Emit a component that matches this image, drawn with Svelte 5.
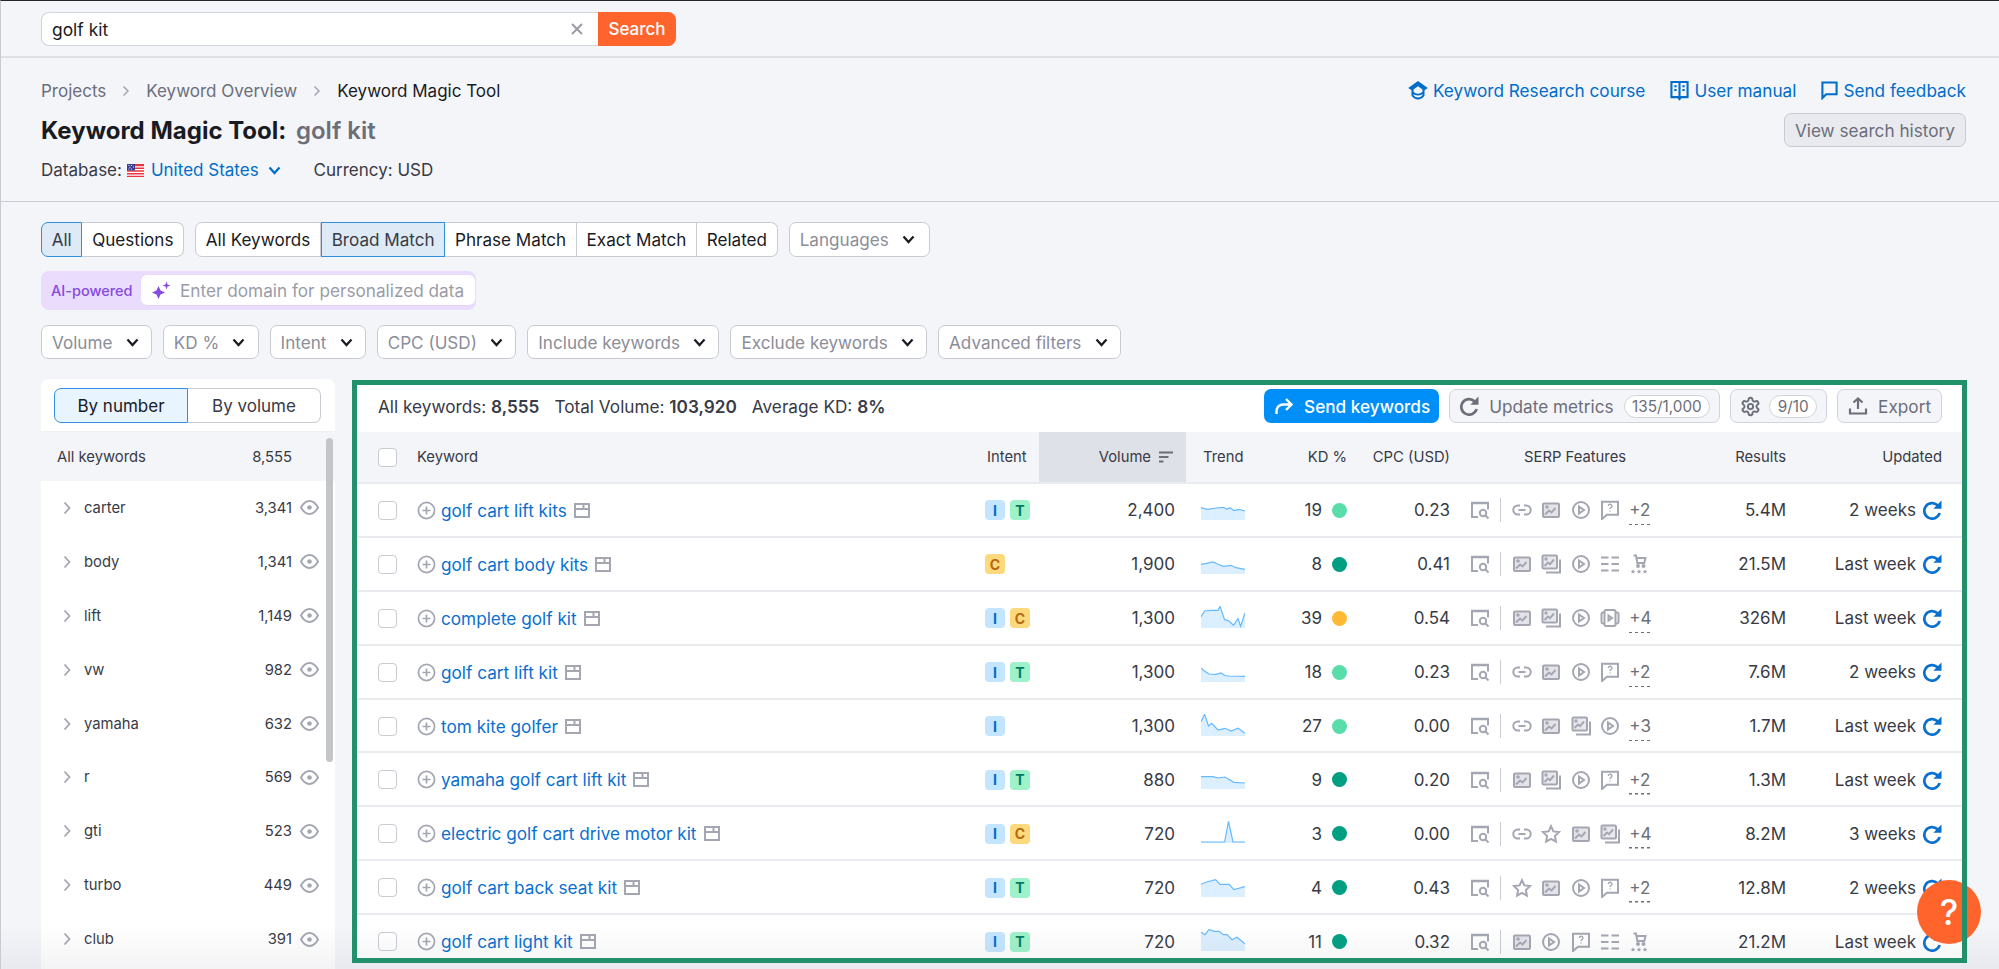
<script>
  const SERP_ICONS = {
    link: '<path d="M8 5.5H5.8a4.5 4.5 0 0 0 0 9H8M12 5.5h2.2a4.5 4.5 0 0 1 0 9H12M6.5 10h7"/>',
    image: '<rect x="2" y="3.5" width="16" height="13.5" rx="1" fill="currentColor" fill-opacity=".3"/><path d="M4 14.5l4-4 2.5 2 4-4.5" /><circle cx="6" cy="7" r=".8" fill="currentColor"/>',
    images: '<rect x="1.5" y="1.5" width="14.5" height="13" rx="1" fill="currentColor" fill-opacity=".25"/><path d="M3.5 12l3.5-3.5 2 1.7L13 5.5"/><circle cx="5" cy="5" r=".7" fill="currentColor"/><path d="M19 5.5v13H5"/>',
    video: '<circle cx="10" cy="10" r="8"/><path d="M8 6.5l5 3.5-5 3.5z"/>',
    question: '<path d="M2 1.8h16v13H7L2 19z"/><path stroke-width="1.4" d="M8.3 6a1.8 1.8 0 1 1 2.6 1.7c-.6.4-.9.7-.9 1.4M10 10.6v1"/>',
    list: '<path stroke-width="2.2" d="M1 3.5h7.5M11.5 3.5H19M1 10h7.5M11.5 10H19M1 16.5h7.5M11.5 16.5H19"/>',
    cart: '<path d="M4.5 1.5h2.5l1.3 7.5h7l1.2-5H7.5"/><circle cx="9" cy="12" r="1" fill="currentColor"/><circle cx="14.5" cy="12" r="1" fill="currentColor"/><path stroke="none" fill="currentColor" d="M4 15.2l.7 1.5 1.6.2-1.2 1.1.3 1.6-1.4-.8-1.4.8.3-1.6-1.2-1.1 1.6-.2zM10 15.2l.7 1.5 1.6.2-1.2 1.1.3 1.6-1.4-.8-1.4.8.3-1.6-1.2-1.1 1.6-.2zM16 15.2l.7 1.5 1.6.2-1.2 1.1.3 1.6-1.4-.8-1.4.8.3-1.6-1.2-1.1 1.6-.2z"/>',
    star: '<path d="M10 2.2l2.4 5.2 5.6.7-4.1 3.9 1 5.6-4.9-2.7-4.9 2.7 1-5.6L2 8.1l5.6-.7z"/>',
    film: '<rect x="4.5" y="2" width="11" height="16" rx="1.5"/><path d="M4.5 4.5H3A1.5 1.5 0 0 0 1.5 6v8A1.5 1.5 0 0 0 3 15.5h1.5M15.5 4.5H17A1.5 1.5 0 0 1 18.5 6v8a1.5 1.5 0 0 1-1.5 1.5h-1.5"/><path d="M8.5 7.5l3.5 2.5-3.5 2.5z"/>'
  };

  const TOPICS = [
    ['carter', '3,341'],
    ['body', '1,341'],
    ['lift', '1,149'],
    ['vw', '982'],
    ['yamaha', '632'],
    ['r', '569'],
    ['gti', '523'],
    ['turbo', '449'],
    ['club', '391']
  ];

  const KEYWORDS = [
    {
      kw: 'golf cart lift kits', intent: ['I', 'T'], vol: '2,400', kd: 19, kdc: 'mid', cpc: '0.23',
      serp: ['link', 'image', 'video', 'question'], more: 2, results: '5.4M', updated: '2 weeks',
      trend: [[0, 9.7], [6.4, 11.3], [15.4, 10], [22.5, 9.3], [26, 11.3], [29, 9.7], [33, 12.7], [38, 11.3], [44, 13]]
    },
    {
      kw: 'golf cart body kits', intent: ['C'], vol: '1,900', kd: 8, kdc: 'low', cpc: '0.41',
      serp: ['image', 'images', 'video', 'list', 'cart'], results: '21.5M', updated: 'Last week',
      trend: [[0, 12.3], [4.6, 11.7], [11.8, 10], [17, 12.3], [22.5, 14.3], [30, 13.3], [35, 15.7], [44, 17.3]]
    },
    {
      kw: 'complete golf kit', intent: ['I', 'C'], vol: '1,300', kd: 39, kdc: 'high', cpc: '0.54',
      serp: ['image', 'images', 'video', 'film'], more: 4, results: '326M', updated: 'Last week',
      trend: [[0, 11], [3.6, 5], [10, 4.3], [17, 4.3], [19, 0.3], [23.6, 13.7], [28, 15], [32.5, 19.3], [37, 12.7], [39.6, 20.3], [44, 7]]
    },
    {
      kw: 'golf cart lift kit', intent: ['I', 'T'], vol: '1,300', kd: 18, kdc: 'mid', cpc: '0.23',
      serp: ['link', 'image', 'video', 'question'], more: 2, results: '7.6M', updated: '2 weeks',
      trend: [[0, 8], [3, 10.7], [8, 14], [15, 14.3], [20, 13], [24, 15.5], [28, 16], [44, 16.3]]
    },
    {
      kw: 'tom kite golfer', intent: ['I'], vol: '1,300', kd: 27, kdc: 'mid', cpc: '0.00',
      serp: ['link', 'image', 'images', 'video'], more: 3, results: '1.7M', updated: 'Last week',
      trend: [[0, 7.7], [3.6, 0.3], [7.5, 12], [10.7, 9.3], [17, 16], [24, 14.3], [30, 17], [37, 14.3], [44, 19.3]]
    },
    {
      kw: 'yamaha golf cart lift kit', intent: ['I', 'T'], vol: '880', kd: 9, kdc: 'low', cpc: '0.20',
      serp: ['image', 'images', 'video', 'question'], more: 2, results: '1.3M', updated: 'Last week',
      trend: [[0, 9.7], [12, 9.7], [17, 11], [24, 10], [33, 15.3], [44, 16]]
    },
    {
      kw: 'electric golf cart drive motor kit', intent: ['I', 'C'], vol: '720', kd: 3, kdc: 'low', cpc: '0.00',
      serp: ['link', 'star', 'image', 'images'], more: 4, results: '8.2M', updated: '3 weeks',
      trend: [[0, 21], [23.6, 21], [27.5, 0.3], [32, 21], [44, 21]]
    },
    {
      kw: 'golf cart back seat kit', intent: ['I', 'T'], vol: '720', kd: 4, kdc: 'low', cpc: '0.43',
      serp: ['star', 'image', 'video', 'question'], more: 2, results: '12.8M', updated: '2 weeks',
      trend: [[0, 9.3], [6.4, 6.7], [14.6, 4.7], [19, 9.3], [28, 9.3], [33, 14.7], [44, 11.7]]
    },
    {
      kw: 'golf cart light kit', intent: ['I', 'T'], vol: '720', kd: 11, kdc: 'low', cpc: '0.32',
      serp: ['image', 'video', 'question', 'list', 'cart'], results: '21.2M', updated: 'Last week',
      trend: [[0, 3.3], [4, 5.7], [8, 0.5], [13.6, 2.3], [18, 2.3], [22.5, 5.7], [26, 5.7], [31, 10.7], [36, 8.3], [44, 14.7]]
    }
  ];

  function linePath(points) {
    return points.map(([x, y], i) => `${i ? 'L' : 'M'}${x} ${y}`).join('');
  }
</script>

{#snippet chevron()}
  <svg class="chev" viewBox="0 0 13 9" width="13" height="9"><path d="M1.5 1.5L6.5 7l5-5.500" /></svg>
{/snippet}

{#snippet refresh(size)}
  <svg class="refresh" viewBox="0 0 20 20" width={size} height={size}>
    <path d="M15.5 5.2A7.800 7.800 0 1 0 17.600 13" />
    <path class="arrow" d="M19.500 .5v8.200h-8.200z" />
  </svg>
{/snippet}

<div class="page">
  <div class="topbar">
    <div class="search">
      <div class="search-input">
        <span>golf kit</span>
        <svg viewBox="0 0 12 12" width="12" height="12"><path d="M1 1l10 10M11 1L1 11" /></svg>
      </div>
      <button class="search-btn">Search</button>
    </div>
  </div>

  <header class="head">
    <div class="head-left">
      <nav class="crumbs">
        <span>Projects</span>
        <svg viewBox="0 0 8 12" width="8" height="12"><path d="M1.5 1.5L6 6l-4.5 4.5" /></svg>
        <span>Keyword Overview</span>
        <svg viewBox="0 0 8 12" width="8" height="12"><path d="M1.5 1.5L6 6l-4.5 4.5" /></svg>
        <span class="current">Keyword Magic Tool</span>
      </nav>
      <h1>Keyword Magic Tool: <span>golf kit</span></h1>
      <div class="db">
        <span>Database:</span>
        <svg class="flag" viewBox="0 0 17 13" width="17" height="13">
          <rect width="17" height="13" fill="#e8323c" />
          <path d="M0 2.8h17M0 5.6h17M0 8.4h17M0 11.2h17" stroke="#fff" stroke-width="1.2" />
          <rect width="8" height="6.5" fill="#3a3f8f" />
          <path d="M1.5 1.5h1M4 1.5h1M6 3h1M2.5 3.5h1M1.5 5h1M4 5h1" stroke="#fff" stroke-width=".9" />
        </svg>
        <span class="db-link">United States</span>
        <svg class="chev blue" viewBox="0 0 13 9" width="13" height="9"><path d="M1.5 1.5L6.5 7l5-5.500" /></svg>
        <span class="currency">Currency: USD</span>
      </div>
    </div>
    <div class="head-right">
      <div class="links">
        <span class="ln">
          <svg viewBox="0 0 20 20" width="20" height="20">
            <path fill="currentColor" d="M10 1L19.800 8l-3.800 2.400L10 6.200 4 10.400.2 8z" />
            <path fill="none" stroke="currentColor" stroke-width="2" d="M4.500 9v6.500c1.500 2 3.500 3 5.500 3s4-1 5.500-3V9" />
            <path fill="none" stroke="currentColor" stroke-width="1.8" d="M4.800 12.500c1.500 1.500 3.300 2.200 5.200 2.200s3.700-.7 5.200-2.200" />
          </svg>
          Keyword Research course
        </span>
        <span class="ln">
          <svg viewBox="0 0 20 22" width="19" height="21">
            <path fill="none" stroke="currentColor" stroke-width="2.2" d="M1.500 2h17v16H11.500l-1.500 2-1.500-2h-7zM10 2v16" />
            <path stroke="currentColor" stroke-width="2" d="M4.500 6.500h2.500M13 6.500h2.500M4.500 10.500h2.500M13 10.500h2.500" />
          </svg>
          User manual
        </span>
        <span class="ln">
          <svg viewBox="0 0 18 20" width="17" height="19">
            <path fill="none" stroke="currentColor" stroke-width="2.2" d="M1.500 1.500h15v12.500H5.500L1.500 18z" />
          </svg>
          Send feedback
        </span>
      </div>
      <button class="history">View search history</button>
    </div>
  </header>

  <section class="filters">
    <div class="filter-row tabs">
      <div class="seg">
        <button class="on">All</button>
        <button>Questions</button>
      </div>
      <div class="seg">
        <button>All Keywords</button>
        <button class="on">Broad Match</button>
        <button>Phrase Match</button>
        <button>Exact Match</button>
        <button>Related</button>
      </div>
      <button class="select">Languages {@render chevron()}</button>
    </div>

    <div class="ai">
      <span class="ai-label">AI-powered</span>
      <div class="ai-input">
        <svg viewBox="0 0 20 20" width="20" height="20">
          <path fill="#8649e1" d="M7.500 5l2 4.500 4.500 2-4.500 2-2 4.500-2-4.500-4.500-2 4.500-2zM15.500 .5l1 3 3 1-3 1-1 3-1-3-3-1 3-1z" />
        </svg>
        <span>Enter domain for personalized data</span>
      </div>
    </div>

    <div class="filter-row last">
      {#each ['Volume', 'KD %', 'Intent', 'CPC (USD)', 'Include keywords', 'Exclude keywords', 'Advanced filters'] as label}
        <button class="select">{label} {@render chevron()}</button>
      {/each}
    </div>
  </section>

  <main class="main">
    <aside class="side">
      <div class="side-top">
        <div class="side-toggle">
          <button class="on">By number</button>
          <button>By volume</button>
        </div>
      </div>
      <div class="side-all">
        <span>All keywords</span>
        <span class="all-num">8,555</span>
      </div>
      {#each TOPICS as [name, count]}
        <div class="topic">
          <svg class="topic-chev" viewBox="0 0 8 14" width="8" height="14"><path d="M1.5 1.5L6.5 7l-5 5.500" /></svg>
          <span class="topic-name">{name}</span>
          <span class="topic-num">{count}</span>
          <svg class="eye" viewBox="0 0 20 20" width="19" height="19">
            <path fill="none" stroke="currentColor" stroke-width="2" d="M1 10C3.500 5.500 6.500 3.200 10 3.200s6.500 2.300 9 6.800c-2.500 4.500-5.500 6.800-9 6.800S3.500 14.500 1 10z" />
            <circle cx="10" cy="10" r="2.400" fill="currentColor" />
          </svg>
        </div>
      {/each}
      <div class="scrollbar"></div>
    </aside>

    <section class="panel">
      <div class="toolbar">
        <div class="stats">
          <span>All keywords: <b>8,555</b></span>
          <span>Total Volume: <b>103,920</b></span>
          <span>Average KD: <b>8%</b></span>
        </div>
        <div class="actions">
          <button class="send">
            <svg viewBox="0 0 20 20" width="20" height="20"><path d="M2.500 18v-3a6.500 6.500 0 0 1 6.500-6.500h8.500M12 3l5.500 5.500-5.500 5.500" /></svg>
            Send keywords
          </button>
          <button class="tool update">
            {@render refresh(20)}
            Update metrics
            <span class="pill">135/1,000</span>
          </button>
          <button class="tool gear">
            <svg viewBox="0 0 24 24" width="21" height="21">
              <path d="M12.220 2h-.440a2 2 0 0 0-2 2v.180a2 2 0 0 1-1 1.730l-.430.250a2 2 0 0 1-2 0l-.150-.080a2 2 0 0 0-2.730.730l-.220.380a2 2 0 0 0 .730 2.730l.150.100a2 2 0 0 1 1 1.720v.510a2 2 0 0 1-1 1.740l-.150.090a2 2 0 0 0-.730 2.730l.220.380a2 2 0 0 0 2.730.730l.150-.080a2 2 0 0 1 2 0l.430.250a2 2 0 0 1 1 1.730V20a2 2 0 0 0 2 2h.440a2 2 0 0 0 2-2v-.180a2 2 0 0 1 1-1.730l.430-.250a2 2 0 0 1 2 0l.150.080a2 2 0 0 0 2.730-.730l.220-.390a2 2 0 0 0-.730-2.730l-.150-.080a2 2 0 0 1-1-1.740v-.500a2 2 0 0 1 1-1.740l.150-.090a2 2 0 0 0 .730-2.730l-.220-.380a2 2 0 0 0-2.730-.730l-.150.080a2 2 0 0 1-2 0l-.430-.250a2 2 0 0 1-1-1.730V4a2 2 0 0 0-2-2z" />
              <circle cx="12" cy="12" r="3" />
            </svg>
            <span class="pill">9/10</span>
          </button>
          <button class="tool export">
            <svg viewBox="0 0 20 20" width="20" height="20"><path d="M10 13V3M5.500 6.500L10 2.500l4.500 4M2 12.500v5h16v-5" /></svg>
            Export
          </button>
        </div>
      </div>

      <div class="row thead">
        <div class="cell"><span class="check"></span></div>
        <div class="cell">Keyword</div>
        <div class="cell intent-h">Intent</div>
        <div class="cell vol-h">
          Volume
          <svg viewBox="0 0 14 12" width="14" height="12"><path d="M0 1.500h14M0 6h9.500M0 10.500h4.500" /></svg>
        </div>
        <div class="cell trend-h">Trend</div>
        <div class="cell kd-h">KD %</div>
        <div class="cell right">CPC (USD)</div>
        <div class="cell serp-h">SERP Features</div>
        <div class="cell right">Results</div>
        <div class="cell right">Updated</div>
      </div>

      {#each KEYWORDS as k}
        <div class="row">
          <div class="cell"><span class="check"></span></div>
          <div class="cell kw">
            <svg class="plus" viewBox="0 0 20 20" width="19" height="19">
              <circle cx="10" cy="10" r="8.500" />
              <path d="M10 5.800v8.400M5.800 10h8.400" />
            </svg>
            <span class="kw-text">{k.kw}</span>
            <svg class="widget" viewBox="0 0 16 15" width="16" height="15">
              <path d="M1 1h14v13H1zM1 6h14M9.500 1v5" />
            </svg>
          </div>
          <div class="cell intents">
            {#each k.intent as t}
              <span class="badge {t}">{t}</span>
            {/each}
          </div>
          <div class="cell vol">{k.vol}</div>
          <div class="cell spark">
            <svg viewBox="0 0 44 22" width="44" height="22">
              <path class="area" d="{linePath(k.trend)}L44 22L0 22Z" />
              <path class="line" d={linePath(k.trend)} />
            </svg>
          </div>
          <div class="cell kd">
            {k.kd}
            <span class="dot {k.kdc}"></span>
          </div>
          <div class="cell right">{k.cpc}</div>
          <div class="cell serp">
            <svg class="sicon" viewBox="0 0 20 20" width="20" height="20">
              <path stroke-width="2.5" d="M1 3h18" />
              <path d="M2 3v14h6M18 3v6.500" />
              <circle cx="13" cy="13" r="3.200" />
              <path d="M15.500 15.500L18.500 18.500" />
            </svg>
            <span class="vline"></span>
            {#each k.serp as s}
              <svg class="sicon" viewBox="0 0 20 20" width="20" height="20">{@html SERP_ICONS[s]}</svg>
            {/each}
            {#if k.more}<span class="more">+{k.more}</span>{/if}
          </div>
          <div class="cell right">{k.results}</div>
          <div class="cell right updated">
            {k.updated}
            {@render refresh(20)}
          </div>
        </div>
      {/each}
    </section>
  </main>

  <div class="fade"></div>
  <button class="help">?</button>
</div>

<style>
  :global(body) {
    margin: 0;
    background: #f4f5f9;
    font-family: Inter, "Noto Sans", sans-serif;
    color: #191b23;
  }
  button {
    font: inherit;
    cursor: pointer;
  }
  svg {
    flex: none;
    display: block;
  }

  .page {
    position: relative;
    width: 1999px;
    height: 969px;
    box-sizing: border-box;
    overflow: hidden;
    background: #f4f5f9;
    border-top: 1px solid #23252c;
    border-left: 1px solid #c9cbd3;
  }

  .topbar {
    height: 57px;
    box-sizing: border-box;
    padding: 11px 0 0 40px;
    border-bottom: 2px solid #dfe1e7;
  }
  .search {
    display: flex;
    width: 635px;
    height: 34px;
  }
  .search-input {
    flex: 1;
    display: flex;
    align-items: center;
    justify-content: space-between;
    padding: 0 15px 0 10px;
    background: #fff;
    border: 1.5px solid #d1d4db;
    border-right: none;
    border-radius: 8px 0 0 8px;
    font-size: 17.4px;
  }
  .search-input svg {
    fill: none;
    stroke: #9a9ca8;
    stroke-width: 2;
  }
  .search-btn {
    width: 78px;
    border: none;
    border-radius: 0 8px 8px 0;
    background: #ff642d;
    color: #fff;
    font-size: 17px;
    font-weight: 500;
  }

  .head {
    display: flex;
    justify-content: space-between;
    height: 144px;
    box-sizing: border-box;
    padding: 22px 33px 0 40px;
    border-bottom: 1px solid #c9cbd5;
  }
  .crumbs {
    display: flex;
    align-items: center;
    gap: 16px;
    height: 22px;
    font-size: 17px;
    color: #6c6e79;
  }
  .crumbs svg {
    fill: none;
    stroke: #a4a6b2;
    stroke-width: 1.5;
  }
  .crumbs .current {
    color: #191b23;
  }
  h1 {
    margin: 13px 0 0;
    font-size: 24px;
    line-height: 32px;
    font-weight: 700;
  }
  h1 span {
    margin-left: 4px;
    color: #6c6e79;
    font-weight: 600;
  }
  .db {
    display: flex;
    align-items: center;
    gap: 5px;
    height: 22px;
    margin-top: 12px;
    font-size: 17px;
    color: #383a45;
  }
  .db-link {
    margin-left: 2px;
    color: #006dca;
  }
  .currency {
    margin-left: 28px;
  }
  .chev {
    fill: none;
    stroke: #191b23;
    stroke-width: 2.2;
  }
  .chev.blue {
    stroke: #006dca;
    margin-left: 4px;
  }

  .head-right {
    display: flex;
    flex-direction: column;
    align-items: flex-end;
  }
  .links {
    display: flex;
    gap: 25px;
    height: 22px;
    margin-top: -1px;
    font-size: 17.2px;
    color: #006dca;
  }
  .ln {
    display: flex;
    align-items: center;
    gap: 5px;
  }
  .history {
    height: 34px;
    margin-top: 12px;
    padding: 0 10px;
    background: #e9eaef;
    border: 1.5px solid #c9cbd3;
    border-radius: 7px;
    font-size: 17.2px;
    color: #6c6e79;
  }

  .filters {
    display: flex;
    flex-direction: column;
    gap: 14px;
    padding: 20px 0 20px 40px;
  }
  .filter-row {
    display: flex;
    gap: 11px;
  }
  .filter-row.last {
    margin-top: 1px;
  }
  .seg {
    display: flex;
  }
  .seg button {
    height: 35px;
    padding: 0 9.7px;
    background: #fff;
    border: 1.5px solid #c9cbd3;
    border-left-width: 0;
    font-size: 17.1px;
    color: #191b23;
  }
  .seg button:first-child {
    border-left-width: 1.5px;
    border-radius: 7px 0 0 7px;
  }
  .seg button:last-child {
    border-radius: 0 7px 7px 0;
  }
  .seg button.on {
    background: #deeaf6;
    border: 1.5px solid #2f8fd8;
    color: #383a45;
  }
  .seg button.on + button {
    border-left-width: 0;
  }
  .select {
    display: flex;
    align-items: center;
    justify-content: space-between;
    gap: 13.2px;
    height: 35px;
    padding: 0 12.2px 0 10px;
    background: #fff;
    border: 1.5px solid #c9cbd3;
    border-radius: 7px;
    font-size: 17.1px;
    color: #8b8d98;
  }
  .tabs .select {
    padding-right: 14px;
  }
  .filter-row.last .select {
    height: 34px;
  }
  .ai {
    display: flex;
    align-items: center;
    width: 435px;
    height: 39px;
    box-sizing: border-box;
    padding: 4px 1px 4px 10px;
    background: #eadcfc;
    border-radius: 8px;
  }
  .ai-label {
    width: 90px;
    font-size: 14.5px;
    font-weight: 500;
    color: #8649e1;
  }
  .ai-input {
    flex: 1;
    display: flex;
    align-items: center;
    gap: 9px;
    height: 100%;
    box-sizing: border-box;
    padding-left: 10px;
    background: #fff;
    border-radius: 6px;
    box-shadow: inset 0 -1px 0 #e3d2fa;
    font-size: 17.2px;
    color: #9a9ca8;
  }

  .main {
    display: flex;
    gap: 17px;
    padding-left: 40px;
    align-items: flex-start;
  }

  .side {
    position: relative;
    width: 294px;
    height: 600px;
    flex: none;
    background: #fff;
    border-radius: 8px 8px 0 0;
    font-size: 14.8px;
  }
  .side-top {
    height: 53px;
    box-sizing: border-box;
    padding: 9px 14px 0 13px;
    border-bottom: 1px solid #f0f1f4;
  }
  .side-toggle {
    display: flex;
    height: 35px;
  }
  .side-toggle button {
    flex: 1;
    background: #fff;
    border: 1.5px solid #c9cbd3;
    border-left: none;
    border-radius: 0 7px 7px 0;
    font-size: 17px;
    color: #383a45;
  }
  .side-toggle button.on {
    background: #e8f4ff;
    border: 1.5px solid #2f90e5;
    border-radius: 7px 0 0 7px;
    color: #191b23;
  }
  .side-all {
    display: flex;
    height: 49px;
    align-items: center;
    padding-left: 16px;
    background: #f4f5f9;
    color: #383a45;
  }
  .all-num {
    margin-left: auto;
    margin-right: 43px;
    color: #383a45;
  }
  .topic {
    display: flex;
    align-items: center;
    height: 53.9px;
    padding-left: 22px;
    color: #383a45;
  }
  .topic-chev {
    fill: none;
    stroke: #a4a6b2;
    stroke-width: 1.8;
  }
  .topic-name {
    margin-left: 13px;
  }
  .topic-num {
    margin-left: auto;
  }
  .eye {
    margin: 0 16px 0 8px;
    color: #a4a6b2;
  }
  .scrollbar {
    position: absolute;
    left: 285px;
    top: 59px;
    width: 7px;
    height: 324px;
    border-radius: 4px;
    background: #c4c5c9;
  }

  .panel {
    position: relative;
    width: 1615px;
    height: 583px;
    flex: none;
    margin-top: 1px;
    box-sizing: border-box;
    padding: 5px 5px 0;
    overflow: hidden;
    background: #fff;
    font-size: 17px;
  }
  .panel::after {
    content: "";
    position: absolute;
    inset: 0;
    z-index: 3;
    border: 5px solid #22906b;
    pointer-events: none;
  }

  .toolbar {
    display: flex;
    align-items: center;
    justify-content: space-between;
    height: 47px;
    box-sizing: border-box;
    padding: 0 20px 5px 21px;
  }
  .stats {
    display: flex;
    gap: 15px;
    font-size: 17.2px;
    color: #383a45;
  }
  .stats b {
    font-weight: 600;
    color: #383a45;
  }
  .actions {
    display: flex;
    gap: 10px;
  }
  .send,
  .tool {
    display: flex;
    align-items: center;
    height: 34px;
    box-sizing: border-box;
    border-radius: 7px;
    font-size: 17.2px;
  }
  .send {
    gap: 10px;
    padding: 0 9px 0 10px;
    background: #008ff8;
    border: none;
    color: #fff;
    font-weight: 500;
  }
  .send svg {
    fill: none;
    stroke: #fff;
    stroke-width: 2.4;
  }
  .tool {
    gap: 10px;
    padding: 0 9px;
    background: #f4f5f9;
    border: 1.5px solid #d1d4db;
    color: #6c6e79;
  }
  .tool.export {
    padding: 0 10px;
  }
  .tool svg {
    fill: none;
    stroke: #6c6e79;
    stroke-width: 2.2;
  }
  .tool.gear {
    gap: 8px;
  }
  .pill {
    padding: 1px 7.5px;
    background: #fff;
    border: 1.5px solid #d1d4db;
    border-radius: 13px;
    font-size: 15.3px;
    color: #6c6e79;
  }
  .refresh {
    fill: none;
    stroke: #0a70d0;
    stroke-width: 2.7;
  }
  .refresh .arrow {
    fill: #0a70d0;
    stroke: none;
  }
  .tool .refresh {
    stroke: #6c6e79;
    stroke-width: 2.7;
  }
  .tool .refresh .arrow {
    fill: #6c6e79;
    stroke: none;
  }

  .row {
    display: grid;
    grid-template-columns: 60px 568px 54px 147px 75px 86px 103px 251px 85px 156px;
    height: 53.9px;
    box-sizing: border-box;
    padding-top: 1px;
    border-bottom: 2px solid #e9ebf0;
    align-items: stretch;
    color: #383a45;
  }
  .thead {
    height: 52px;
    padding-top: 0;
    background: #f4f5f9;
    font-size: 14.8px;
    color: #383a45;
  }
  .cell {
    display: flex;
    align-items: center;
    min-width: 0;
  }
  .right {
    justify-content: flex-end;
  }
  .check {
    width: 19px;
    height: 19px;
    margin-left: 21px;
    box-sizing: border-box;
    background: #fff;
    border: 1.5px solid #c9cbd3;
    border-radius: 4px;
  }
  .intent-h {
    padding-left: 2px;
  }
  .vol-h {
    justify-content: flex-end;
    gap: 8px;
    padding-right: 13px;
    background: #dfe1e8;
  }
  .vol-h svg {
    fill: none;
    stroke: #6c6e79;
    stroke-width: 2.2;
  }
  .trend-h {
    padding-left: 17px;
  }
  .kd-h {
    justify-content: flex-end;
  }
  .serp-h {
    padding-left: 74px;
  }
  .kw {
    gap: 0;
    color: #0a70d0;
    font-size: 17.2px;
  }
  .plus {
    fill: none;
    stroke: #a4a6b2;
    stroke-width: 1.8;
  }
  .kw-text {
    margin-left: 5px;
  }
  .widget {
    margin-left: 7px;
    fill: none;
    stroke: #a4a6b2;
    stroke-width: 2;
  }
  .intents {
    gap: 5px;
  }
  .badge {
    display: flex;
    align-items: center;
    justify-content: center;
    width: 20px;
    height: 20px;
    border-radius: 4px;
    font-size: 14px;
    font-weight: 700;
  }
  .badge.I {
    background: #c4e5fe;
    color: #006dca;
  }
  .badge.T {
    background: #9ef2c9;
    color: #007c65;
  }
  .badge.C {
    background: #fcd97c;
    color: #b4690e;
  }
  .vol {
    justify-content: flex-end;
    padding-right: 11px;
  }
  .spark {
    padding: 0 0 3px 15px;
  }
  .area {
    fill: #dcefff;
  }
  .line {
    fill: none;
    stroke: #65b9ff;
    stroke-width: 1.2;
  }
  .kd {
    justify-content: flex-end;
    gap: 10px;
  }
  .dot {
    width: 15px;
    height: 15px;
    border-radius: 50%;
  }
  .dot.low {
    background: #009f81;
  }
  .dot.mid {
    background: #59ddaa;
  }
  .dot.high {
    background: #ffb932;
  }
  .serp {
    padding-left: 20px;
    gap: 9.4px;
  }
  .sicon {
    color: #a4a6b2;
    fill: none;
    stroke: #a4a6b2;
    stroke-width: 2;
  }
  .vline {
    width: 1px;
    height: 24px;
    margin: 0 1.5px 0 .5px;
    background: #c9cbd3;
  }
  .more {
    height: 30px;
    line-height: 30px;
    color: #6c6e79;
    background: repeating-linear-gradient(90deg, #6c6e79 0 3.5px, transparent 3.5px 6px) left bottom / 100% 1.5px no-repeat;
  }
  .updated {
    gap: 6px;
  }

  .fade {
    position: absolute;
    left: 0;
    right: 0;
    bottom: 0;
    height: 44px;
    z-index: 1;
    background: linear-gradient(rgba(120, 125, 140, 0), rgba(120, 125, 140, .09));
    pointer-events: none;
  }
  .help {
    position: absolute;
    left: 1916px;
    top: 879px;
    z-index: 2;
    width: 64px;
    height: 64px;
    padding: 0;
    border: none;
    border-radius: 50%;
    background: #ff642d;
    color: #fff;
    font-size: 35px;
    font-weight: 500;
  }
</style>
